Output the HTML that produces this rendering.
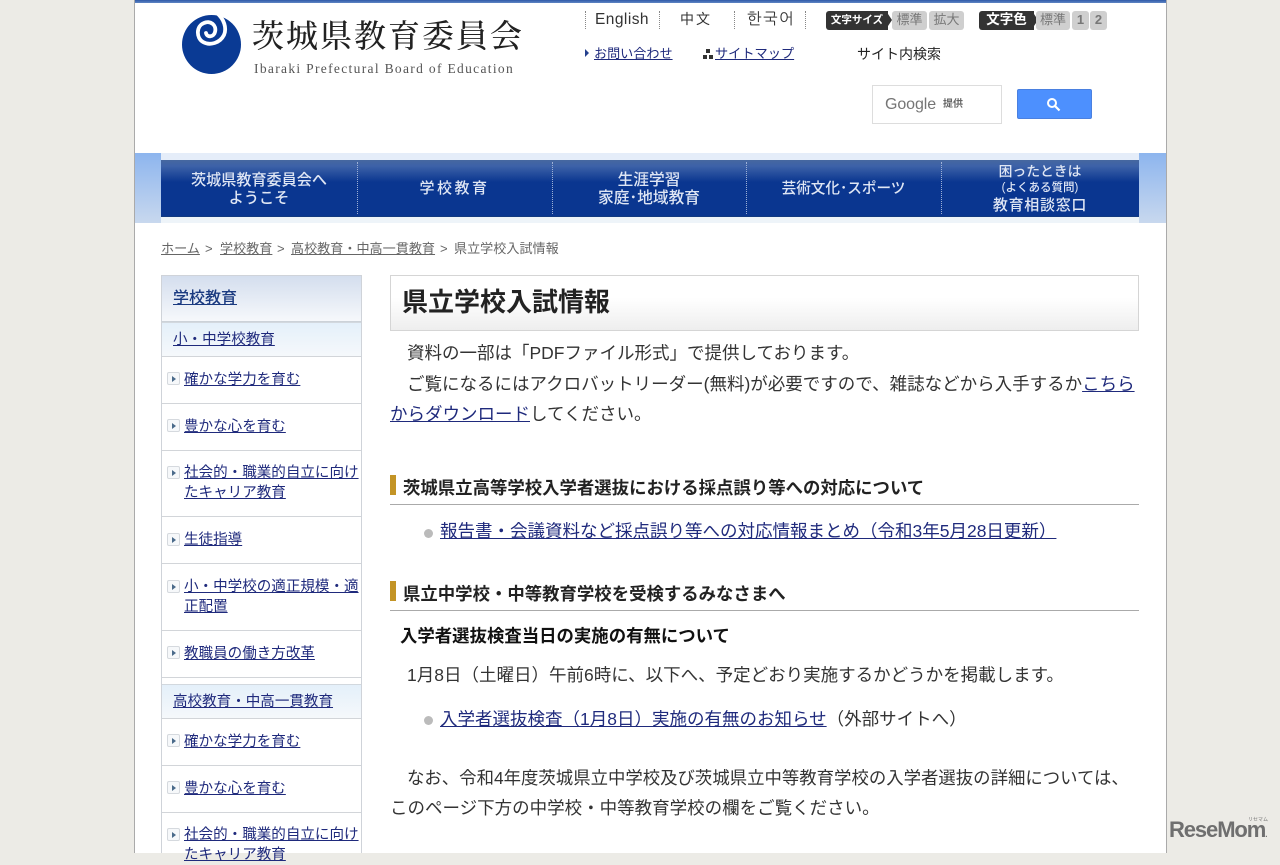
<!DOCTYPE html>
<html lang="ja"><head><meta charset="utf-8"><title>県立学校入試情報</title>
<style>
html,body{margin:0;padding:0}
body{width:1280px;height:853px;overflow:hidden;position:relative;background:#ecebe6;font-family:"Liberation Sans","Noto Sans CJK JP",sans-serif;color:#333}
#p{position:absolute;left:134px;top:0;width:1031px;height:853px;background:#fff;border-left:1px solid #aaa;border-right:1px solid #aaa}
.t{position:absolute;white-space:nowrap;margin:0}
a{color:#1f2a7c;text-decoration:underline}
.box{position:absolute;box-sizing:border-box}
.sb{position:absolute;left:161px;width:201px;box-sizing:border-box;border-left:1px solid #cfd3d9;border-right:1px solid #cfd3d9}
.s{font-size:14.55px;line-height:20px}
.ar{position:absolute;left:167px;width:13px;height:13px;box-sizing:border-box;border:1px solid #d5d9de;border-radius:2px;background:#f6f8fa}
.ar:after{content:"";position:absolute;left:4px;top:2.5px;border-left:4px solid #4a6a8a;border-top:3px solid transparent;border-bottom:3px solid transparent}
.ln{position:absolute;left:162px;width:199px;height:1px;background:#d2d5d9}
.sub{position:absolute;left:162px;width:199px;height:35px;background:linear-gradient(#e4f0fa,#f5f8fb);border-top:1px solid #d2d8de;border-bottom:1px solid #d2d5d9;box-sizing:border-box}
.m{font-size:17.5px;line-height:25px;color:#333}
.h{font-size:17.4px;font-weight:700;color:#222;line-height:22px}
.bar{position:absolute;left:390px;width:6px;height:20px;background:#c39426}
.hr{position:absolute;left:390px;width:749px;height:1px;background:#aaa}
.dot{position:absolute;left:424px;width:9px;height:9px;border-radius:50%;background:#bbb}
.nv{position:absolute;color:#dfe6f4;text-align:center;font-weight:500;font-size:15.7px;line-height:18px;white-space:nowrap}
.sep{position:absolute;top:162px;height:52px;width:0;border-left:1px dotted #9db0d6}
.vs{position:absolute;top:11px;height:18px;width:0;border-left:1px dotted #888}
.bd{position:absolute;top:11px;height:19px;background:#333;color:#fff;font-size:10.5px;font-weight:700;line-height:18px;text-align:center;border-radius:3px 0 0 3px;white-space:nowrap}
.bd:after{content:"";position:absolute;right:-4px;top:3px;border-left:4px solid #333;border-top:6px solid transparent;border-bottom:6px solid transparent}
.gb{position:absolute;top:11px;height:19px;background:#cfcfcf;color:#777;font-size:13px;line-height:18px;text-align:center;border-radius:3px;white-space:nowrap}
</style></head><body>
<div id="p"></div>
<div class="box" style="left:135px;top:0;width:1031px;height:3px;background:linear-gradient(#2f5aa8,#5f86c4)"></div>

<svg style="position:absolute;left:181px;top:12px" width="62" height="64" viewBox="0 0 62 64"><circle cx="30.500" cy="32.500" r="29.500" fill="#0a3a94"/><path d="M36 1 C43 7 46 16 43 23 C39 31 29 34 22 30 C15 26 15 14 23 11 C29 8 36 13 34 20 C33 25 26 26 25 21" fill="none" stroke="#fff" stroke-width="3.800" stroke-linecap="round"/></svg>
<p class="t" style="left:252px;top:14px;font-family:'Noto Serif CJK SC','Liberation Serif',serif;font-size:32px;font-weight:500;line-height:40px;letter-spacing:2px;color:#222" lang="ja">茨城県教育委員会</p>
<p class="t" style="left:254px;top:61px;font-family:'Liberation Serif',serif;font-size:13.500px;line-height:16px;letter-spacing:1.320px;color:#555">Ibaraki Prefectural Board of Education</p>

<div class="vs" style="left:585px"></div><div class="vs" style="left:659px"></div><div class="vs" style="left:734px"></div><div class="vs" style="left:805px"></div>
<p class="t" style="left:595px;top:10px;font-size:15.500px;line-height:20px;letter-spacing:.45px;color:#333">English</p>
<p class="t" style="left:680px;top:10px;font-size:14px;line-height:18px;letter-spacing:2px;color:#333" lang="zh-CN">中文</p>
<p class="t" style="left:747px;top:10px;font-size:15.500px;line-height:20px;letter-spacing:1.500px;color:#333;font-family:'NanumGothic','Noto Sans CJK KR',sans-serif" lang="ko">한국어</p>
<div class="bd" style="left:826px;width:62px">文字サイズ</div>
<div class="gb" style="left:892px;width:35px">標準</div><div class="gb" style="left:929px;width:35px">拡大</div>
<div class="bd" style="left:979px;width:55px;font-size:13.500px">文字色</div>
<div class="gb" style="left:1036px;width:34px">標準</div><div class="gb" style="left:1072px;width:17px;font-weight:700">1</div><div class="gb" style="left:1090px;width:17px;font-weight:700">2</div>

<div class="box" style="left:585px;top:49px;border-left:4px solid #24408e;border-top:4px solid transparent;border-bottom:4px solid transparent"></div>
<p class="t" style="left:594px;top:44px;font-size:13.100px;line-height:20px"><a href="#">お問い合わせ</a></p>
<svg style="position:absolute;left:703px;top:49px" width="10" height="10" viewBox="0 0 10 10"><rect x="3" y="0" width="4" height="4" fill="#333"/><rect x="0" y="6" width="4" height="4" fill="#333"/><rect x="6" y="6" width="4" height="4" fill="#333"/></svg>
<p class="t" style="left:715px;top:44px;font-size:13.200px;line-height:20px"><a href="#">サイトマップ</a></p>
<p class="t" style="left:857px;top:44px;font-size:14px;line-height:20px;color:#222">サイト内検索</p>

<div class="box" style="left:872px;top:85px;width:130px;height:39px;border:1px solid #ddd;background:#fff"></div>
<p class="t" style="left:885px;top:95px;font-size:16px;line-height:20px;color:#757575;letter-spacing:-.1px">Google</p>
<p class="t" style="left:943px;top:97px;font-size:10px;line-height:15px;color:#666;font-weight:700">提供</p>
<div class="box" style="left:1017px;top:89px;width:75px;height:30px;background:#4d90fe;border:1px solid #4a80e0;border-radius:2px"></div>
<svg style="position:absolute;left:1046px;top:97px" width="15" height="15" viewBox="0 0 15 15"><circle cx="6" cy="6" r="4" fill="none" stroke="#fff" stroke-width="2"/><path d="M9 9 L13.500 13.500" stroke="#fff" stroke-width="2.200"/></svg>

<div class="box" style="left:135px;top:153px;width:26px;height:70px;background:linear-gradient(#8db5ee,#c8d8ee)"></div>
<div class="box" style="left:1139px;top:153px;width:27px;height:70px;background:linear-gradient(#8db5ee,#c8d8ee)"></div>
<div class="box" style="left:161px;top:153px;width:978px;height:8px;background:#e5edf9"></div>
<div class="box" style="left:161px;top:217px;width:978px;height:6px;background:#eef4f9"></div>
<div class="box" style="left:161px;top:160px;width:978px;height:57px;background:linear-gradient(#46689f 0,#3d62a8 6px,#0a3690 22px,#0a3690 100%);border-bottom:1px solid #123a80"></div>
<div class="sep" style="left:357px"></div><div class="sep" style="left:552px"></div><div class="sep" style="left:746px"></div><div class="sep" style="left:941px"></div>
<div class="nv" style="left:161px;width:196px;top:172px;font-size:15.100px">茨城県教育委員会へ<br>ようこそ</div>
<div class="nv" style="left:357px;width:195px;top:180px;font-size:15px;letter-spacing:2.500px">学校教育</div>
<div class="nv" style="left:552px;width:194px;top:172px">生涯学習<br>家庭･地域教育</div>
<div class="nv" style="left:746px;width:195px;top:180px;font-size:14.600px">芸術文化･スポーツ</div>
<div class="nv" style="left:941px;width:198px;top:163px;font-size:13.800px">困ったときは</div>
<div class="nv" style="left:941px;width:198px;top:181px;font-size:11.500px;line-height:14px">(よくある質問)</div>
<div class="nv" style="left:941px;width:198px;top:197px;font-size:15px;letter-spacing:.7px">教育相談窓口</div>

<p class="t" style="left:161px;top:239px;font-size:13.100px;line-height:20px;color:#666"><a href="#" style="color:#666">ホーム</a></p>
<p class="t" style="left:205px;top:239px;font-size:13.100px;line-height:20px;color:#666">&gt;</p>
<p class="t" style="left:220px;top:239px;font-size:13.100px;line-height:20px;color:#666"><a href="#" style="color:#666">学校教育</a></p>
<p class="t" style="left:277px;top:239px;font-size:13.100px;line-height:20px;color:#666">&gt;</p>
<p class="t" style="left:291px;top:239px;font-size:13.100px;line-height:20px;color:#666"><a href="#" style="color:#666">高校教育・中高一貫教育</a></p>
<p class="t" style="left:440px;top:239px;font-size:13.100px;line-height:20px;color:#666">&gt;</p>
<p class="t" style="left:454px;top:239px;font-size:13.100px;line-height:20px;color:#666">県立学校入試情報</p>

<!-- sidebar -->
<div class="sb" style="top:275px;height:578px"></div>
<div class="box" style="left:161px;top:275px;width:201px;height:47px;background:linear-gradient(#d4deee,#f6f8fb);border:1px solid #cfd3d9;border-bottom:1px solid #ccd2d8"></div>
<p class="t" style="left:173px;top:288px;font-size:16px;line-height:22px;font-weight:500"><a href="#" style="color:#1a3a80">学校教育</a></p>
<div class="sub" style="top:322px"></div>
<p class="t s" style="left:173px;top:330px"><a href="#">小・中学校教育</a></p>
<div class="ar" style="top:372px"></div><p class="t s" style="left:184px;top:370px"><a href="#">確かな学力を育む</a></p><div class="ln" style="top:403px"></div>
<div class="ar" style="top:419px"></div><p class="t s" style="left:184px;top:417px"><a href="#">豊かな心を育む</a></p><div class="ln" style="top:450px"></div>
<div class="ar" style="top:466px"></div><p class="t s" style="left:184px;top:463px"><a href="#">社会的・職業的自立に向け</a></p><p class="t s" style="left:184px;top:483px"><a href="#">たキャリア教育</a></p><div class="ln" style="top:516px"></div>
<div class="ar" style="top:533px"></div><p class="t s" style="left:184px;top:530px"><a href="#">生徒指導</a></p><div class="ln" style="top:563px"></div>
<div class="ar" style="top:580px"></div><p class="t s" style="left:184px;top:577px"><a href="#">小・中学校の適正規模・適</a></p><p class="t s" style="left:184px;top:597px"><a href="#">正配置</a></p><div class="ln" style="top:630px"></div>
<div class="ar" style="top:646px"></div><p class="t s" style="left:184px;top:644px"><a href="#">教職員の働き方改革</a></p><div class="ln" style="top:677px"></div>
<div class="box" style="left:162px;top:678px;width:199px;height:6px;background:#fff"></div>
<div class="sub" style="top:684px"></div>
<p class="t s" style="left:173px;top:692px"><a href="#">高校教育・中高一貫教育</a></p>
<div class="ar" style="top:734px"></div><p class="t s" style="left:184px;top:732px"><a href="#">確かな学力を育む</a></p><div class="ln" style="top:765px"></div>
<div class="ar" style="top:781px"></div><p class="t s" style="left:184px;top:779px"><a href="#">豊かな心を育む</a></p><div class="ln" style="top:812px"></div>
<div class="ar" style="top:828px"></div><p class="t s" style="left:184px;top:825px"><a href="#">社会的・職業的自立に向け</a></p><p class="t s" style="left:184px;top:845px"><a href="#">たキャリア教育</a></p>

<!-- main -->
<div class="box" style="left:390px;top:275px;width:749px;height:56px;border:1px solid #d5d5d5;background:linear-gradient(#fff 40%,#eee)"></div>
<p class="t" style="left:402px;top:286px;font-size:26px;line-height:32px;font-weight:700;color:#222">県立学校入試情報</p>

<p class="t m" style="left:407px;top:341px">資料の一部は「PDFファイル形式」で提供しております。</p>
<p class="t m" style="left:407px;top:372px">ご覧になるにはアクロバットリーダー(無料)が必要ですので、雑誌などから入手するか<a href="#">こちら</a></p>
<p class="t m" style="left:390px;top:402px"><a href="#">からダウンロード</a>してください。</p>

<div class="bar" style="top:475px"></div>
<p class="t h" style="left:403px;top:477px">茨城県立高等学校入学者選抜における採点誤り等への対応について</p>
<div class="hr" style="top:504px"></div>
<div class="dot" style="top:529px"></div>
<p class="t m" style="left:440px;top:519px"><a href="#">報告書・会議資料など採点誤り等への対応情報まとめ（令和3年5月28日更新）</a></p>

<div class="bar" style="top:581px"></div>
<p class="t h" style="left:403px;top:583px">県立中学校・中等教育学校を受検するみなさまへ</p>
<div class="hr" style="top:610px"></div>
<p class="t h" style="left:400px;top:625px;color:#111">入学者選抜検査当日の実施の有無について</p>
<p class="t m" style="left:407px;top:663px">1月8日（土曜日）午前6時に、以下へ、予定どおり実施するかどうかを掲載します。</p>
<div class="dot" style="top:716px"></div>
<p class="t m" style="left:440px;top:707px"><a href="#">入学者選抜検査（1月8日）実施の有無のお知らせ</a>（外部サイトへ）</p>
<p class="t m" style="left:407px;top:766px;font-size:17.4px">なお、令和4年度茨城県立中学校及び茨城県立中等教育学校の入学者選抜の詳細については、</p>
<p class="t m" style="left:390px;top:796px">このページ下方の中学校・中等教育学校の欄をご覧ください。</p>

<p class="t" style="left:1169px;top:815px;font-size:22px;line-height:30px;font-weight:700;color:#6f6f6f;letter-spacing:-1.100px">ReseMom<span style="font-size:8px">.</span></p>
<p class="t" style="left:1248px;top:817px;font-size:5px;line-height:6px;color:#777">リセマム</p>
</body></html>
